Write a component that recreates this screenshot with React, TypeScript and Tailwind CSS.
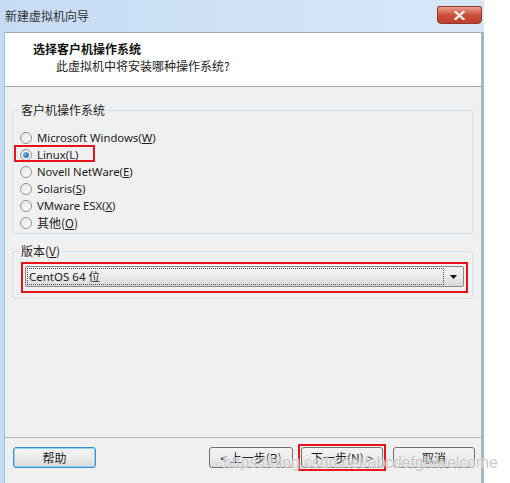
import React from "react";

const cjk = { fontFamily: '"Noto Sans CJK SC", "Noto Sans", sans-serif' };
const lat = { fontFamily: '"Noto Sans", "Noto Sans CJK SC", sans-serif' };

function Radio({ checked }: { checked?: boolean }) {
  return (
    <div className="w-[12px] h-[12px] rounded-full border border-[#8f9499] bg-gradient-to-br from-[#e6e6e6] to-[#fbfbfb] flex items-center justify-center shrink-0">
      {checked && (
        <div className="w-[6px] h-[6px] rounded-full bg-gradient-to-br from-[#7ec3f0] to-[#1a5a9c]" />
      )}
    </div>
  );
}

function RadioRow({ label, mn, after, checked }: { label: string; mn: string; after?: string; checked?: boolean }) {
  return (
    <div className="flex items-center h-[17px] gap-[5px]">
      <Radio checked={checked} />
      <span className="text-[11.3px] text-[#1e1e1e] leading-none" style={lat}>
        {label}(<span className="underline">{mn}</span>){after}
      </span>
    </div>
  );
}

function Btn({ children, cls }: { children: React.ReactNode; cls?: string }) {
  return (
    <div
      className={
        "h-[21px] rounded-[3px] border flex items-center justify-center text-[12px] text-[#1e1e1e] bg-gradient-to-b from-[#f4f4f4] via-[#ececec] to-[#d9d9d9] " +
        (cls ?? "border-[#707070]")
      }
      style={cjk}
    >
      {children}
    </div>
  );
}

export default function App() {
  return (
    <div className="w-[510px] h-[483px] bg-white relative overflow-hidden">
      <div className="w-[484px] h-[483px] flex flex-col bg-gradient-to-r from-[#c6dcf4] to-[#d8e8f9]">
        {/* title bar */}
        <div className="h-[32px] flex items-start justify-between">
          <div className="pl-[5px] pt-[10px] text-[12px] leading-none text-[#333]" style={cjk}>
            新建虚拟机向导
          </div>
          <div className="mt-[6px] mr-[2px] w-[45px] h-[18px] rounded-b-[4px] rounded-t-[2px] border border-[#8c3a2f] bg-gradient-to-b from-[#e8a090] via-[#cc4f3c] to-[#c1402e] flex items-center justify-center">
            <svg width="11" height="9" viewBox="0 0 11 9">
              <path d="M1.5 1 L9.5 8 M9.5 1 L1.5 8" stroke="#f5f5f5" strokeWidth="2.3" strokeLinecap="square" />
            </svg>
          </div>
        </div>
        {/* body */}
        <div className="flex-1 flex">
          <div className="w-[5px] border-r border-[#9fbfe2]" />
          <div className="flex-1 flex flex-col bg-[#f0f0f0]">
            {/* header */}
            <div className="h-[55px] bg-white border-t border-b border-[#a9a9a9] flex flex-col">
              <div className="pl-[28px] pt-[8px] text-[12px] font-bold leading-[16px] text-[#111]" style={cjk}>
                选择客户机操作系统
              </div>
              <div className="pl-[51px] pt-[1px] text-[12px] leading-[16px] text-[#222]" style={cjk}>
                此虚拟机中将安装哪种操作系统?
              </div>
            </div>
            {/* content */}
            <div className="flex-1 flex flex-col px-[7px] pt-[16px]">
              <fieldset className="border border-[#d5dfe5] rounded-[3px] h-[131px] pl-[7px] pt-[12px] mr-[1px]">
                <legend className="px-[1px] text-[12px] leading-[14px] text-[#1e1e1e]" style={cjk}>
                  客户机操作系统
                </legend>
                <div className="flex flex-col">
                  <RadioRow label="Microsoft Windows" mn="W" />
                  <div className="relative w-fit">
                    <RadioRow label="Linux" mn="L" checked />
                    <div className="absolute left-[-6px] top-[-1px] w-[81px] h-[17px] border-2 border-[#e8141a]" />
                  </div>
                  <RadioRow label="Novell NetWare" mn="E" />
                  <RadioRow label="Solaris" mn="S" />
                  <RadioRow label="VMware ESX" mn="X" />
                  <div className="flex items-center h-[17px] gap-[5px]">
                    <Radio />
                    <span className="text-[12px] text-[#1e1e1e] leading-none" style={cjk}>
                      其他(<span className="underline">O</span>)
                    </span>
                  </div>
                </div>
              </fieldset>
              <fieldset className="mt-[10px] border border-[#d5dfe5] rounded-[3px] h-[55px] pl-[7px] pr-[4px] pt-[4px] mr-[1px]">
                <legend className="px-[1px] text-[12px] leading-[14px] text-[#1e1e1e]" style={cjk}>
                  版本(<span className="underline">V</span>)
                </legend>
                <div className="border-2 border-[#e8141a] h-[31px] ml-[1px] p-[2px]">
                  <div className="h-[21px] border border-[#8a8a8a] rounded-[2px] bg-gradient-to-b from-[#f4f4f4] via-[#ebebeb] to-[#d8d8d8] flex items-center p-[1px]">
                    <div className="flex-1 h-full border border-dotted border-[#555] flex items-center pl-[1px] text-[11.5px] text-[#1e1e1e]" style={lat}>
                      CentOS 64 位
                    </div>
                    <div className="w-[18px] flex items-center justify-center">
                      <svg width="7" height="4" viewBox="0 0 7 4">
                        <path d="M0 0 H7 L3.5 4 Z" fill="#111" />
                      </svg>
                    </div>
                  </div>
                </div>
              </fieldset>
              <div className="flex-1" />
            </div>
            {/* footer */}
            <div className="h-[46px] border-t border-[#b4b4b4] flex items-start pt-[9px] pl-[8px]">
              <Btn cls="w-[83px] border-[#3d8fd1] shadow-[inset_0_0_0_1px_#8fd3f7]">帮助</Btn>
              <div className="w-[113px]" />
              <Btn cls="w-[84px] border-[#707070]">&lt; 上一步(B)</Btn>
              <div className="ml-[5px] border-2 border-[#e8141a] p-[1px] -mt-[3px]">
                <Btn cls="w-[82px] border-[#707070]">下一步(N) &gt;</Btn>
              </div>
              <div className="w-[7px]" />
              <Btn cls="w-[82px] border-[#707070]">取消</Btn>
            </div>
          </div>
          <div className="w-[3px] bg-[#a4b5c7]" />
        </div>
      </div>
      <div
        className="absolute left-[223px] top-[453px] text-[15.7px] leading-[20px] text-[#c4c4c4] opacity-90 [text-shadow:0_0_1px_#ffffff,0_0_2px_#ffffff]"
        style={{ fontFamily: '"Liberation Sans", Arial, sans-serif' }}
      >
        https://blog.csdn.net/abcdefghiwelcome
      </div>
    </div>
  );
}
